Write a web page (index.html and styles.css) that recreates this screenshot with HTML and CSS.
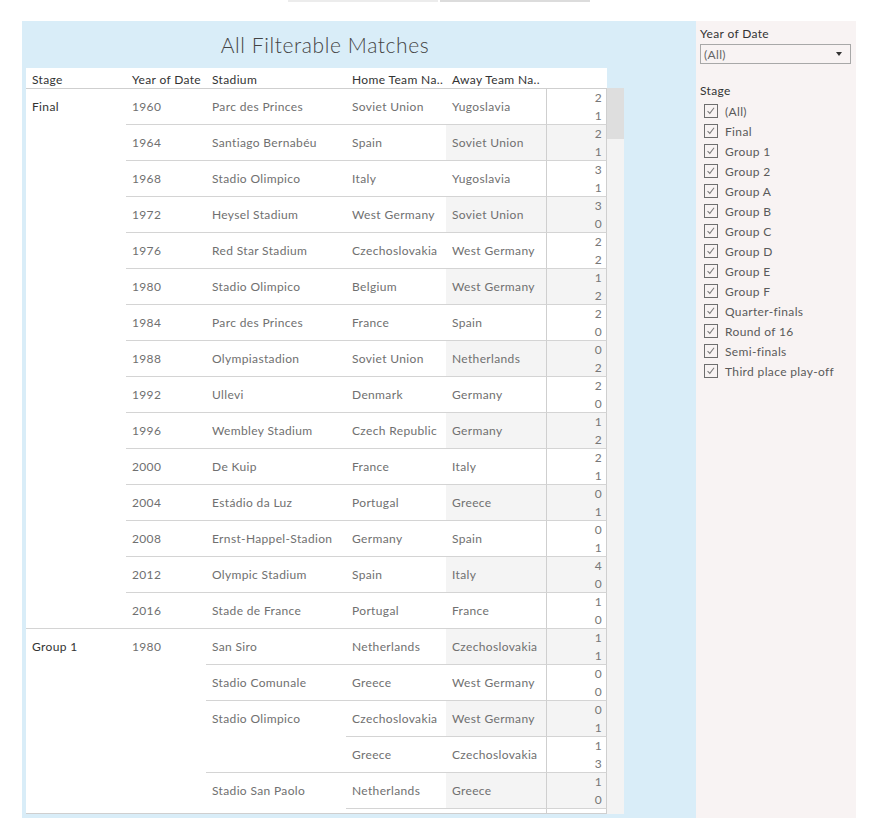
FILE: index.html
```html
<!DOCTYPE html>
<html>
<head>
<meta charset="utf-8">
<link rel="stylesheet" href="styles.css">
</head>
<body>
<div class="topbar"><span class="tab tab1"></span><span class="tab tab2"></span></div>
<div class="dash">
  <section class="viz">
    <h1 class="title">All Filterable Matches</h1>
    <div class="table">
      <div class="thead grid">
        <div class="th">Stage</div>
        <div class="th">Year of Date</div>
        <div class="th">Stadium</div>
        <div class="th">Home Team Na..</div>
        <div class="th">Away Team Na..</div>
        <div class="th"></div>
      </div>
      <div class="body-row">
        <div class="tbody grid">
          <div class="td stage span15">Final</div>
          <div class="td">1960</div><div class="td">Parc des Princes</div><div class="td">Soviet Union</div><div class="td">Yugoslavia</div><div class="td score">2<br>1</div>
          <div class="td">1964</div><div class="td">Santiago Bernabéu</div><div class="td">Spain</div><div class="td alt">Soviet Union</div><div class="td score alt">2<br>1</div>
          <div class="td">1968</div><div class="td">Stadio Olimpico</div><div class="td">Italy</div><div class="td">Yugoslavia</div><div class="td score">3<br>1</div>
          <div class="td">1972</div><div class="td">Heysel Stadium</div><div class="td">West Germany</div><div class="td alt">Soviet Union</div><div class="td score alt">3<br>0</div>
          <div class="td">1976</div><div class="td">Red Star Stadium</div><div class="td">Czechoslovakia</div><div class="td">West Germany</div><div class="td score">2<br>2</div>
          <div class="td">1980</div><div class="td">Stadio Olimpico</div><div class="td">Belgium</div><div class="td alt">West Germany</div><div class="td score alt">1<br>2</div>
          <div class="td">1984</div><div class="td">Parc des Princes</div><div class="td">France</div><div class="td">Spain</div><div class="td score">2<br>0</div>
          <div class="td">1988</div><div class="td">Olympiastadion</div><div class="td">Soviet Union</div><div class="td alt">Netherlands</div><div class="td score alt">0<br>2</div>
          <div class="td">1992</div><div class="td">Ullevi</div><div class="td">Denmark</div><div class="td">Germany</div><div class="td score">2<br>0</div>
          <div class="td">1996</div><div class="td">Wembley Stadium</div><div class="td">Czech Republic</div><div class="td alt">Germany</div><div class="td score alt">1<br>2</div>
          <div class="td">2000</div><div class="td">De Kuip</div><div class="td">France</div><div class="td">Italy</div><div class="td score">2<br>1</div>
          <div class="td">2004</div><div class="td">Estádio da Luz</div><div class="td">Portugal</div><div class="td alt">Greece</div><div class="td score alt">0<br>1</div>
          <div class="td">2008</div><div class="td">Ernst-Happel-Stadion</div><div class="td">Germany</div><div class="td">Spain</div><div class="td score">0<br>1</div>
          <div class="td">2012</div><div class="td">Olympic Stadium</div><div class="td">Spain</div><div class="td alt">Italy</div><div class="td score alt">4<br>0</div>
          <div class="td">2016</div><div class="td">Stade de France</div><div class="td">Portugal</div><div class="td">France</div><div class="td score">1<br>0</div>

          <div class="td stage span6">Group 1</div>
          <div class="td span6">1980</div>
          <div class="td">San Siro</div><div class="td">Netherlands</div><div class="td alt">Czechoslovakia</div><div class="td score alt">1<br>1</div>
          <div class="td">Stadio Comunale</div><div class="td">Greece</div><div class="td">West Germany</div><div class="td score">0<br>0</div>
          <div class="td span2">Stadio Olimpico</div><div class="td">Czechoslovakia</div><div class="td alt">West Germany</div><div class="td score alt">0<br>1</div>
          <div class="td">Greece</div><div class="td">Czechoslovakia</div><div class="td score">1<br>3</div>
          <div class="td span2">Stadio San Paolo</div><div class="td">Netherlands</div><div class="td alt">Greece</div><div class="td score alt">1<br>0</div>
          <div class="td"></div><div class="td"></div><div class="td score"></div>
        </div>
        <div class="scroll"><div class="thumb"></div></div>
      </div>
    </div>
  </section>
  <aside class="filters">
    <div class="flabel">Year of Date</div>
    <div class="select"><span>(All)</span><span class="caret"></span></div>
    <div class="flabel stage-label">Stage</div>
    <ul class="checks">
      <li class="check"><span class="box"><svg viewBox="0 0 14 14" width="12" height="12"><path d="M3 7.2 L5.6 9.8 L10.6 3.2" fill="none" stroke="#7a7a7a" stroke-width="1.2"/></svg></span>(All)</li>
      <li class="check"><span class="box"><svg viewBox="0 0 14 14" width="12" height="12"><path d="M3 7.2 L5.6 9.8 L10.6 3.2" fill="none" stroke="#7a7a7a" stroke-width="1.2"/></svg></span>Final</li>
      <li class="check"><span class="box"><svg viewBox="0 0 14 14" width="12" height="12"><path d="M3 7.2 L5.6 9.8 L10.6 3.2" fill="none" stroke="#7a7a7a" stroke-width="1.2"/></svg></span>Group 1</li>
      <li class="check"><span class="box"><svg viewBox="0 0 14 14" width="12" height="12"><path d="M3 7.2 L5.6 9.8 L10.6 3.2" fill="none" stroke="#7a7a7a" stroke-width="1.2"/></svg></span>Group 2</li>
      <li class="check"><span class="box"><svg viewBox="0 0 14 14" width="12" height="12"><path d="M3 7.2 L5.6 9.8 L10.6 3.2" fill="none" stroke="#7a7a7a" stroke-width="1.2"/></svg></span>Group A</li>
      <li class="check"><span class="box"><svg viewBox="0 0 14 14" width="12" height="12"><path d="M3 7.2 L5.6 9.8 L10.6 3.2" fill="none" stroke="#7a7a7a" stroke-width="1.2"/></svg></span>Group B</li>
      <li class="check"><span class="box"><svg viewBox="0 0 14 14" width="12" height="12"><path d="M3 7.2 L5.6 9.8 L10.6 3.2" fill="none" stroke="#7a7a7a" stroke-width="1.2"/></svg></span>Group C</li>
      <li class="check"><span class="box"><svg viewBox="0 0 14 14" width="12" height="12"><path d="M3 7.2 L5.6 9.8 L10.6 3.2" fill="none" stroke="#7a7a7a" stroke-width="1.2"/></svg></span>Group D</li>
      <li class="check"><span class="box"><svg viewBox="0 0 14 14" width="12" height="12"><path d="M3 7.2 L5.6 9.8 L10.6 3.2" fill="none" stroke="#7a7a7a" stroke-width="1.2"/></svg></span>Group E</li>
      <li class="check"><span class="box"><svg viewBox="0 0 14 14" width="12" height="12"><path d="M3 7.2 L5.6 9.8 L10.6 3.2" fill="none" stroke="#7a7a7a" stroke-width="1.2"/></svg></span>Group F</li>
      <li class="check"><span class="box"><svg viewBox="0 0 14 14" width="12" height="12"><path d="M3 7.2 L5.6 9.8 L10.6 3.2" fill="none" stroke="#7a7a7a" stroke-width="1.2"/></svg></span>Quarter-finals</li>
      <li class="check"><span class="box"><svg viewBox="0 0 14 14" width="12" height="12"><path d="M3 7.2 L5.6 9.8 L10.6 3.2" fill="none" stroke="#7a7a7a" stroke-width="1.2"/></svg></span>Round of 16</li>
      <li class="check"><span class="box"><svg viewBox="0 0 14 14" width="12" height="12"><path d="M3 7.2 L5.6 9.8 L10.6 3.2" fill="none" stroke="#7a7a7a" stroke-width="1.2"/></svg></span>Semi-finals</li>
      <li class="check"><span class="box"><svg viewBox="0 0 14 14" width="12" height="12"><path d="M3 7.2 L5.6 9.8 L10.6 3.2" fill="none" stroke="#7a7a7a" stroke-width="1.2"/></svg></span>Third place play-off</li>
    </ul>
  </aside>
</div>
</body>
</html>
```

FILE: styles.css
```css
body {
  margin: 0;
  background: #fff;
  font-family: Lato, "Open Sans", sans-serif;
  font-size: 12px;
  letter-spacing: 0.35px;
}

.topbar {
  display: flex;
  gap: 2px;
  height: 2px;
  padding-left: 288px;
}
.tab { width: 150px; height: 2px; }
.tab1 { background: #ececec; }
.tab2 { background: #dcdcdc; }

.dash {
  display: flex;
  margin: 19px 0 0 22px;
  height: 797px;
}

.viz {
  width: 674px;
  background: #d9edf8;
  display: flex;
  flex-direction: column;
}

.title {
  margin: 0 0 0 4px;
  width: 598px;
  height: 47px;
  box-sizing: border-box;
  padding-top: 12px;
  text-align: center;
  font-weight: 300;
  font-size: 21px;
  line-height: 24px;
  letter-spacing: 0.6px;
  color: #444;
}

.table { margin-left: 4px; }

.grid {
  display: grid;
  grid-template-columns: 100px 80px 140px 100px 100px 61px;
}

.thead {
  width: 581px;
  height: 21px;
  box-sizing: border-box;
  background: #fff;
  border-bottom: 1px solid #cfcfcf;
}
.th {
  padding: 3px 0 0 6px;
  line-height: 18px;
  color: #333;
  white-space: nowrap;
  overflow: hidden;
}

.body-row { display: flex; }

.tbody {
  width: 581px;
  height: 725px;
  box-sizing: border-box;
  background: #fff;
  border-bottom: 1px solid #cfcfcf;
  overflow: hidden;
  grid-auto-rows: 36px;
  align-content: start;
}

.td {
  box-sizing: border-box;
  border-bottom: 1px solid #d4d4d4;
  padding: 9px 0 0 6px;
  line-height: 18px;
  color: #707070;
  white-space: nowrap;
}
.stage { color: #333; }
.alt { background: #f4f4f4; }
.score {
  padding: 0 4px 0 0;
  text-align: right;
  color: #777;
  border-left: 1px solid #cfcfcf;
  border-right: 1px solid #cfcfcf;
}
.span2 { grid-row: span 2; }
.span6 { grid-row: span 6; }
.span15 { grid-row: span 15; }

.scroll {
  width: 17px;
  height: 726px;
  margin-top: -1px;
  background: #f3f3f3;
}
.thumb {
  height: 51px;
  background: #dedede;
}

.filters {
  width: 160px;
  box-sizing: border-box;
  background: #f8f3f3;
  padding: 4px 0 0 4px;
}
.flabel {
  line-height: 18px;
  color: #333;
}
.select {
  margin-top: 1px;
  width: 151px;
  height: 20px;
  box-sizing: border-box;
  border: 1px solid #a8a8a8;
  display: flex;
  align-items: center;
  justify-content: space-between;
  padding: 0 8px 0 3px;
  color: #666;
}
.caret {
  width: 0;
  height: 0;
  border-left: 3.5px solid transparent;
  border-right: 3.5px solid transparent;
  border-top: 4px solid #333;
}
.stage-label { margin-top: 18px; }

.checks {
  list-style: none;
  margin: 1px 0 0;
  padding: 0 0 0 4px;
}
.check {
  display: flex;
  align-items: center;
  gap: 7px;
  height: 20px;
  color: #5a5a5a;
}
.box {
  width: 14px;
  height: 14px;
  box-sizing: border-box;
  border: 1px solid #6e6e6e;
  display: flex;
  align-items: center;
  justify-content: center;
}
```
